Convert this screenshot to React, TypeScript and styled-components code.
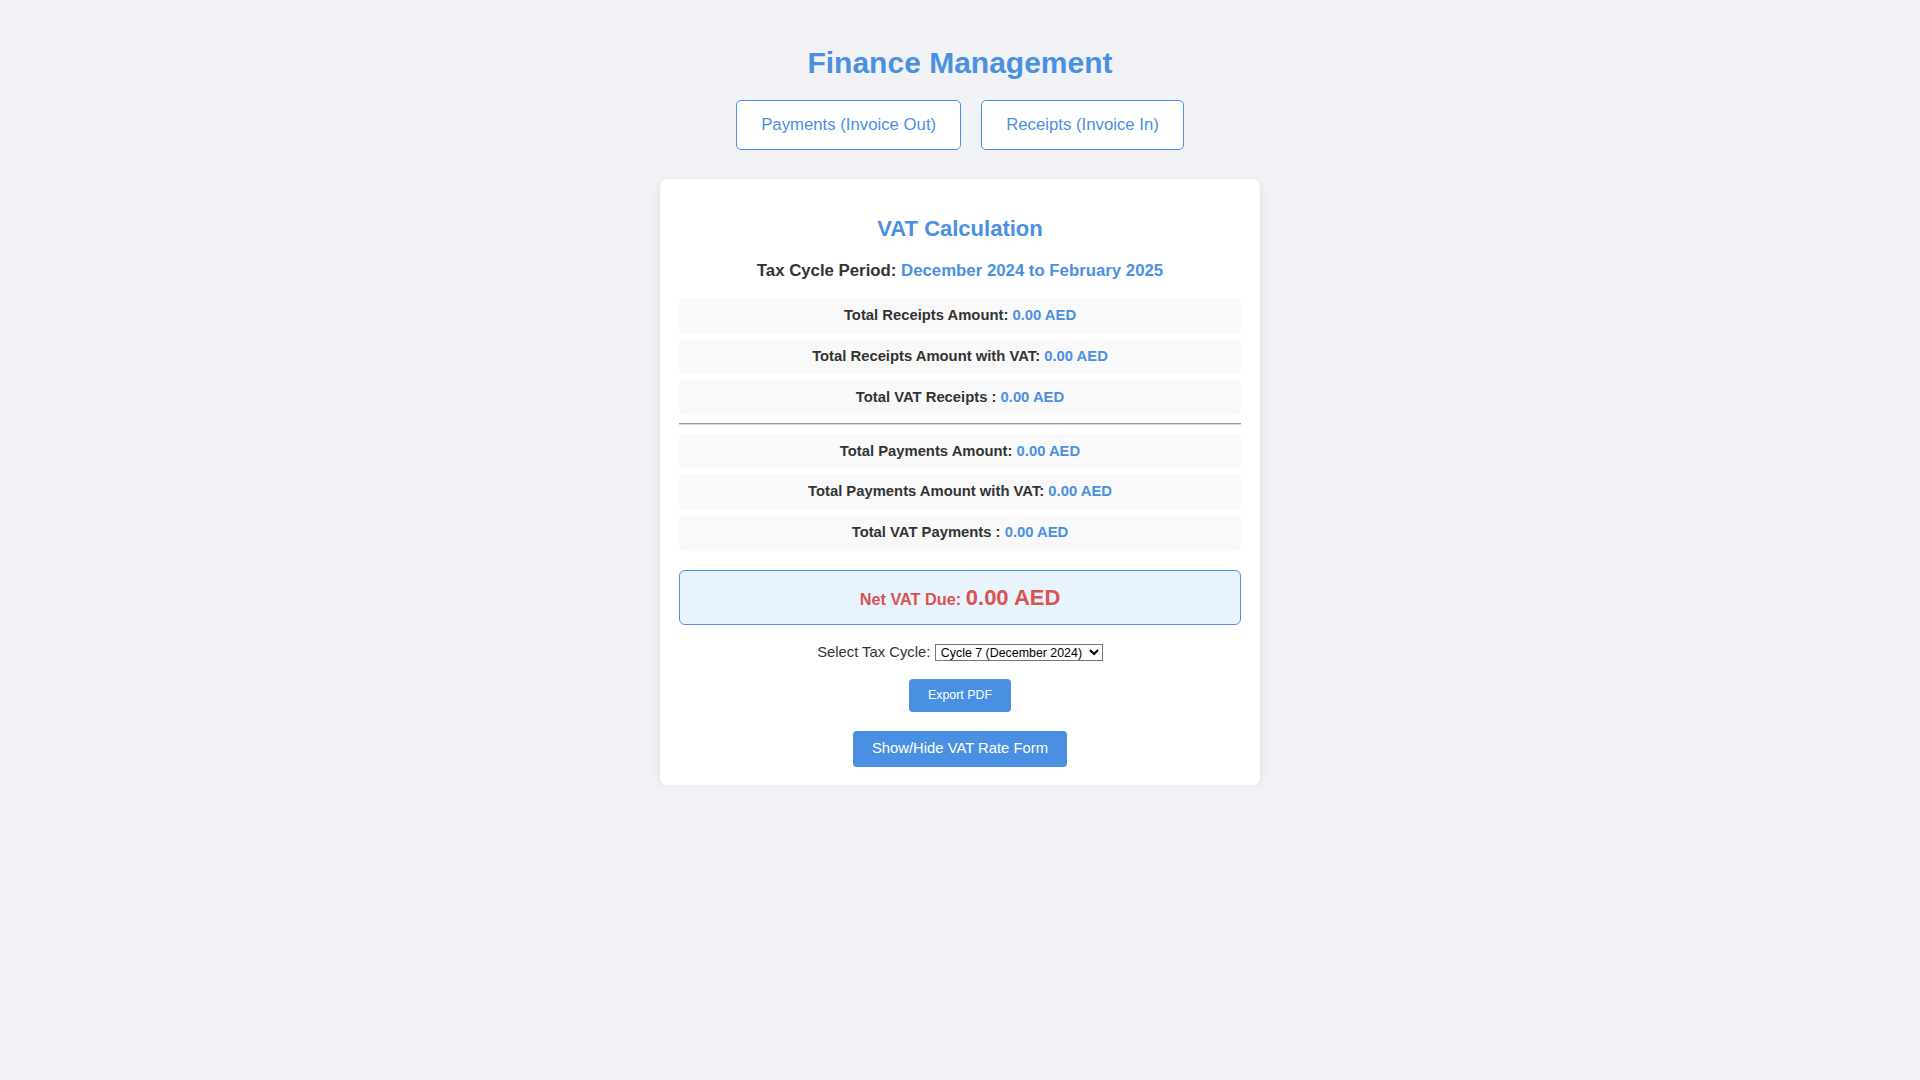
import React from "react";
import styled, { createGlobalStyle } from "styled-components";

const GlobalStyle = createGlobalStyle`
  html, body {
    margin: 0;
    padding: 0;
    background: #f0f2f5;
    font-family: "Liberation Sans", Arial, sans-serif;
    color: #333;
  }
`;

const Page = styled.div`
  display: flex;
  flex-direction: column;
  align-items: center;
  text-align: center;
`;

const Title = styled.h1`
  margin: 46px 0 0;
  font-size: 30px;
  line-height: 34px;
  font-weight: bold;
  color: #4a90e2;
`;

const NavRow = styled.div`
  display: flex;
  gap: 20px;
  margin-top: 20px;
`;

const NavButton = styled.button`
  background: #fff;
  border: 1px solid #4a90e2;
  border-radius: 5px;
  color: #4a90e2;
  font-family: "Liberation Sans", Arial, sans-serif;
  font-size: 16.75px;
  line-height: 19.2px;
  padding: 14.4px 24px;
  cursor: pointer;
`;

const Card = styled.div`
  box-sizing: border-box;
  width: 600px;
  margin-top: 29px;
  padding: 18.6px 18.6px 18px;
  background: #fff;
  border-radius: 7px;
  box-shadow: 0 2px 10px rgba(0, 0, 0, 0.08);
  display: flex;
  flex-direction: column;
  align-items: stretch;
`;

const CardTitle = styled.h2`
  margin: 18px 0 0;
  font-size: 22px;
  line-height: 25.3px;
  font-weight: bold;
  color: #4a90e2;
`;

const Period = styled.p`
  margin: 20px 0 0;
  font-size: 16.8px;
  line-height: 19.3px;
  font-weight: bold;
  color: #333;
`;

const Value = styled.span`
  color: #4a90e2;
`;

const RowGroup = styled.div<{ $first?: boolean }>`
  display: flex;
  flex-direction: column;
  gap: 5.3px;
  margin-top: ${(p) => (p.$first ? "17.9px" : "0")};
`;

const Row = styled.div`
  background: #f9f9f9;
  border-radius: 5px;
  padding: 9px;
  font-size: 14.8px;
  line-height: 17.5px;
  font-weight: bold;
  color: #333;
`;

const Divider = styled.hr`
  margin: 8px 0 8.5px;
  height: 0;
  border: none;
  border-top: 1px solid #9a9a9a;
  border-bottom: 1px solid #d6d6d6;
`;

const NetBox = styled.div`
  margin-top: 19.4px;
  padding: 14px;
  border: 1px solid #4a90e2;
  border-radius: 6px;
  background: #e8f3fe;
  color: #d9534f;
  font-weight: bold;
  font-size: 22px;
  line-height: 25.3px;
`;

const NetLabel = styled.span`
  font-size: 16.3px;
  line-height: 16px;
`;

const NetValue = styled.span`
  font-size: 22px;
`;

const SelectRow = styled.div`
  margin-top: 18.5px;
  font-size: 14.8px;
  line-height: 17px;
  color: #333;
  display: flex;
  justify-content: center;
  align-items: center;
  gap: 4.5px;
`;

const CycleSelect = styled.select`
  font-family: "Liberation Sans", Arial, sans-serif;
  font-size: 12.4px;
  line-height: 14.3px;
  height: 16.5px;
  padding: 0 0 0 1px;
  border: 1px solid #767676;
  border-radius: 0;
  background: #fff;
  color: #000;
`;

const ActionButton = styled.button<{ $size: "small" | "large" }>`
  align-self: center;
  background: #4a90e2;
  color: #fff;
  border: none;
  border-radius: 4px;
  font-family: "Liberation Sans", Arial, sans-serif;
  cursor: pointer;
  font-size: ${(p) => (p.$size === "small" ? "12.4px" : "14.8px")};
  line-height: ${(p) => (p.$size === "small" ? "14.3px" : "17px")};
  padding: ${(p) => (p.$size === "small" ? "9.2px 19px" : "9.3px 18.7px")};
  margin-top: ${(p) => (p.$size === "small" ? "18px" : "19.3px")};
`;

const receipts = [
  { label: "Total Receipts Amount:", value: "0.00 AED" },
  { label: "Total Receipts Amount with VAT:", value: "0.00 AED" },
  { label: "Total VAT Receipts :", value: "0.00 AED" },
];

const payments = [
  { label: "Total Payments Amount:", value: "0.00 AED" },
  { label: "Total Payments Amount with VAT:", value: "0.00 AED" },
  { label: "Total VAT Payments :", value: "0.00 AED" },
];

export default function App() {
  return (
    <>
      <GlobalStyle />
      <Page>
        <Title>Finance Management</Title>
        <NavRow>
          <NavButton>Payments (Invoice Out)</NavButton>
          <NavButton>Receipts (Invoice In)</NavButton>
        </NavRow>
        <Card>
          <CardTitle>VAT Calculation</CardTitle>
          <Period>
            Tax Cycle Period: <Value>December 2024 to February 2025</Value>
          </Period>
          <RowGroup $first>
            {receipts.map((r) => (
              <Row key={r.label}>
                {r.label} <Value>{r.value}</Value>
              </Row>
            ))}
          </RowGroup>
          <Divider />
          <RowGroup>
            {payments.map((r) => (
              <Row key={r.label}>
                {r.label} <Value>{r.value}</Value>
              </Row>
            ))}
          </RowGroup>
          <NetBox>
            <NetLabel>Net VAT Due: </NetLabel>
            <NetValue>0.00 AED</NetValue>
          </NetBox>
          <SelectRow>
            <span>Select Tax Cycle:</span>
            <CycleSelect defaultValue="7">
              <option value="7">Cycle 7 (December 2024)</option>
              <option value="6">Cycle 6 (September 2024)</option>
              <option value="5">Cycle 5 (June 2024)</option>
            </CycleSelect>
          </SelectRow>
          <ActionButton $size="small">Export PDF</ActionButton>
          <ActionButton $size="large">Show/Hide VAT Rate Form</ActionButton>
        </Card>
      </Page>
    </>
  );
}
